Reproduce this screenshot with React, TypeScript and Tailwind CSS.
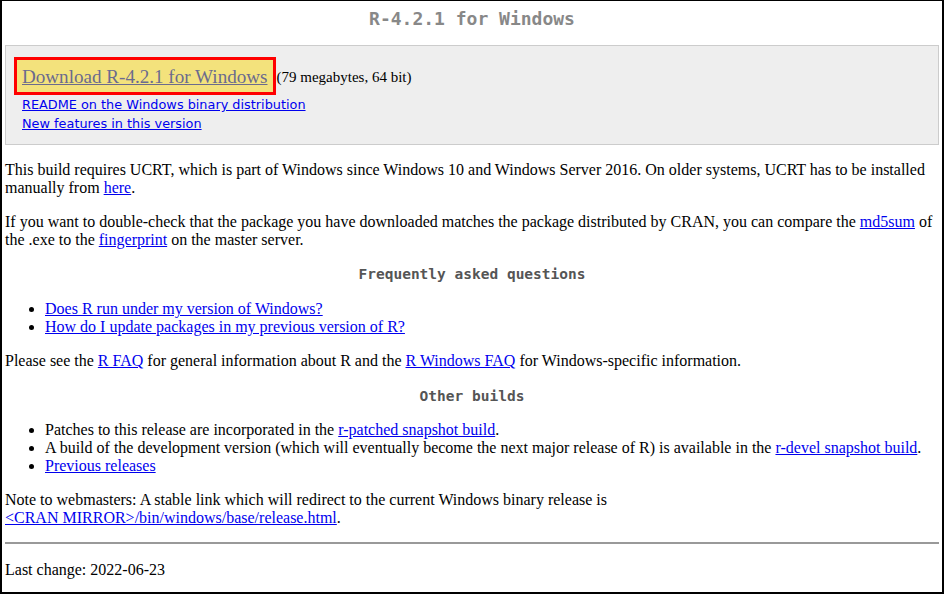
import React from "react"

const serif = "font-['Liberation_Serif','Times_New_Roman',serif]"
const mono = "font-['DejaVu_Sans_Mono','Liberation_Mono',monospace]"
const sans = "font-['DejaVu_Sans','Verdana',sans-serif]"

function A({ children }: { children: React.ReactNode }) {
  return <a href="#" className="text-[#0000ee] underline">{children}</a>
}

export default function App() {
  return (
    <div className={`w-[944px] h-[594px] overflow-hidden bg-white border-t border-x-2 border-b-2 border-black text-black ${serif} text-[16px]`}>
      <div className="px-[3px]">
        <h1 className={`${mono} text-center font-bold text-[18px] text-[#888] pt-[4px] h-[44px]`}>
          R-4.2.1 for Windows
        </h1>

        <div className="bg-[#eee] border border-[#ccc] pt-[11px] pb-[11px] pl-[8px]">
          <div className="flex items-center">
            <a
              href="#"
              className="inline-block border-[3px] border-[#f00] bg-[#f3e27c] px-[5px] h-[38px] leading-[33px] text-[19.1px] text-[#6b6b8e] underline"
            >
              Download R-4.2.1 for Windows
            </a>
            <span className="ml-[1px] text-[15px] relative top-[1px]">(79 megabytes, 64 bit)</span>
          </div>
          <div className={`${sans} text-[12.85px] pl-[8px] leading-[19px]`}>
            <div><A>README on the Windows binary distribution</A></div>
            <div><A>New features in this version</A></div>
          </div>
        </div>

        <p className="mt-[16px] leading-[18px]">
          This build requires UCRT, which is part of Windows since Windows 10 and Windows Server 2016. On older systems, UCRT has to be installed manually from <A>here</A>.
        </p>
        <p className="mt-[16px] leading-[18px]">
          If you want to double-check that the package you have downloaded matches the package distributed by CRAN, you can compare the <A>md5sum</A> of the .exe to the <A>fingerprint</A> on the master server.
        </p>

        <h2 className={`${mono} text-center font-bold text-[14.5px] text-[#555] mt-[16px] mb-[17px] leading-[18px]`}>
          Frequently asked questions
        </h2>
        <ul className="list-disc pl-[40px] leading-[18px]">
          <li><A>Does R run under my version of Windows?</A></li>
          <li><A>How do I update packages in my previous version of R?</A></li>
        </ul>
        <p className="mt-[16px] leading-[18px]">
          Please see the <A>R FAQ</A> for general information about R and the <A>R Windows FAQ</A> for Windows-specific information.
        </p>

        <h2 className={`${mono} text-center font-bold text-[14.5px] text-[#555] mt-[17px] mb-[16px] leading-[18px]`}>
          Other builds
        </h2>
        <ul className="list-disc pl-[40px] leading-[18px]">
          <li>Patches to this release are incorporated in the <A>r-patched snapshot build</A>.</li>
          <li>A build of the development version (which will eventually become the next major release of R) is available in the <A>r-devel snapshot build</A>.</li>
          <li><A>Previous releases</A></li>
        </ul>
        <p className="mt-[16px] leading-[18px]">
          Note to webmasters: A stable link which will redirect to the current Windows binary release is
          <br />
          <A>&lt;CRAN MIRROR&gt;/bin/windows/base/release.html</A>.
        </p>

        <hr className="mt-[15px] border-0 border-t-2 border-[#999]" />
        <p className="mt-[17px] leading-[18px]">Last change: 2022-06-23</p>
      </div>
    </div>
  )
}
